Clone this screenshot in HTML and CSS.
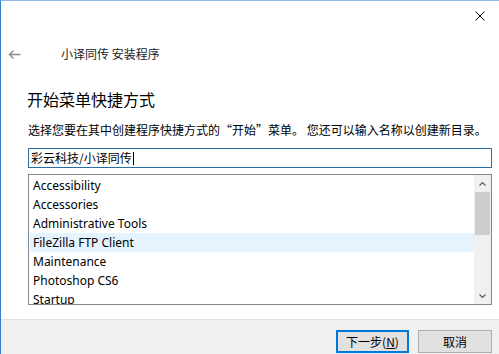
FILE: index.html
```html
<!DOCTYPE html>
<html lang="zh-CN">
<head>
    <meta charset="UTF-8">
    <title>小译同传 安装程序</title>
    <link rel="stylesheet" href="styles.css">
</head>
<body>
    <div class="window">
        <!-- title bar with only the close button -->
        <div class="titlebar">
            <span class="close-btn">
                <svg width="10" height="10" viewBox="0 0 10 10">
                    <path d="M0.5 0.5 L9.5 9.5 M9.5 0.5 L0.5 9.5" stroke="#000" stroke-width="1" fill="none"/>
                </svg>
            </span>
        </div>

        <div class="nav">
            <span class="back">
                <svg width="13" height="11" viewBox="0 0 13 11">
                    <path d="M12.5 5.5 H1.5 M5.5 1.5 L1.5 5.5 L5.5 9.5" stroke="#8a8a8a" stroke-width="1.4" fill="none"/>
                </svg>
            </span>
            <span class="app-title">小译同传 安装程序</span>
        </div>

        <div class="content">
            <h1 class="page-title">开始菜单快捷方式</h1>
            <p class="desc">选择您要在其中创建程序快捷方式的“开始”菜单。 您还可以输入名称以创建新目录。</p>

            <div class="textbox">彩云科技/小译同传<span class="caret"></span></div>

            <div class="listbox">
                <ul class="items">
                    <li>Accessibility</li>
                    <li>Accessories</li>
                    <li>Administrative Tools</li>
                    <li class="hover">FileZilla FTP Client</li>
                    <li>Maintenance</li>
                    <li>Photoshop CS6</li>
                    <li>Startup</li>
                </ul>
                <div class="scrollbar">
                    <span class="sb-arrow">
                        <svg width="7" height="4" viewBox="0 0 7 4"><path d="M0.5 3.5 L3.5 0.5 L6.5 3.5" stroke="#606060" stroke-width="1.2" fill="none"/></svg>
                    </span>
                    <span class="sb-thumb"></span>
                    <span class="sb-space"></span>
                    <span class="sb-arrow">
                        <svg width="7" height="4" viewBox="0 0 7 4"><path d="M0.5 0.5 L3.5 3.5 L6.5 0.5" stroke="#606060" stroke-width="1.2" fill="none"/></svg>
                    </span>
                </div>
            </div>
        </div>

        <div class="footer">
            <button class="btn default">下一步(<u>N</u>)</button>
            <button class="btn">取消</button>
        </div>
    </div>
</body>
</html>
```

FILE: styles.css
```css
/* Windows 10 style installer page */
* {
    margin: 0;
    padding: 0;
    box-sizing: border-box;
}

body {
    font-family: "Noto Sans CJK SC", "Noto Sans", sans-serif;
    font-size: 12px;
    color: #000;
    background: #fff;
}

.window {
    width: 499px;
    height: 354px;
    border-top: 1px solid #8fbbe8;
    border-left: 1px solid #2e7fd0;
    display: flex;
    flex-direction: column;
    background: #fff;
    overflow: hidden;
}

.titlebar {
    height: 30px;
    display: flex;
    justify-content: flex-end;
    align-items: center;
}

.close-btn {
    display: flex;
    width: 46px;
    height: 30px;
    align-items: center;
    justify-content: center;
    margin-right: -4px;
}

.nav {
    margin-top: 13px;
    height: 20px;
    display: flex;
    align-items: center;
}

.back {
    display: flex;
    margin-left: 7px;
    width: 13px;
}

.app-title {
    margin-left: 40px;
    font-size: 12px;
    color: #222;
    line-height: 20px;
}

.content {
    padding-left: 27px;
    padding-right: 7px;
}

.page-title {
    margin-top: 24px;
    margin-left: -1px;
    font-size: 16px;
    font-weight: normal;
    line-height: 22px;
}

.desc {
    margin-top: 12px;
    line-height: 16px;
    white-space: nowrap;
}

.textbox {
    margin-top: 10px;
    height: 20px;
    width: 464px;
    border: 1px solid #2a6ea8;
    padding-left: 2px;
    line-height: 18px;
    display: flex;
    align-items: center;
}

.caret {
    display: inline-block;
    width: 1px;
    height: 13px;
    background: #000;
    margin-left: 1px;
}

.listbox {
    margin-top: 6px;
    width: 464px;
    height: 131px;
    border: 1px solid #828790;
    display: flex;
    overflow: hidden;
}

.items {
    list-style: none;
    flex: 1;
    padding: 1px 0 0 1px;
    font-family: "Segoe UI", "Noto Sans", sans-serif;
    font-size: 12px;
}

.items li {
    height: 19px;
    line-height: 19px;
    padding-left: 3px;
    white-space: nowrap;
}

.items li.hover {
    background: #e5f3ff;
}

.scrollbar {
    width: 17px;
    background: #f0f0f0;
    display: flex;
    flex-direction: column;
}

.sb-arrow {
    height: 17px;
    display: flex;
    align-items: center;
    justify-content: center;
}

.sb-thumb {
    height: 43px;
    margin: 0 1px;
    background: #cdcdcd;
}

.sb-space {
    flex: 1;
}

.footer {
    margin-top: auto;
    height: 35px;
    border-top: 1px solid #dfdfdf;
    background: #f0f0f0;
    display: flex;
    justify-content: flex-end;
    align-items: flex-start;
    gap: 9px;
    padding: 10px 7px 0 0;
}

.btn {
    width: 74px;
    height: 23px;
    font-family: "Noto Sans CJK SC", sans-serif;
    font-size: 12px;
    background: #e1e1e1;
    border: 1px solid #adadad;
    color: #000;
}

.btn.default {
    width: 73px;
    border: 2px solid #0078d7;
}

.btn u {
    text-decoration: underline;
}
```
